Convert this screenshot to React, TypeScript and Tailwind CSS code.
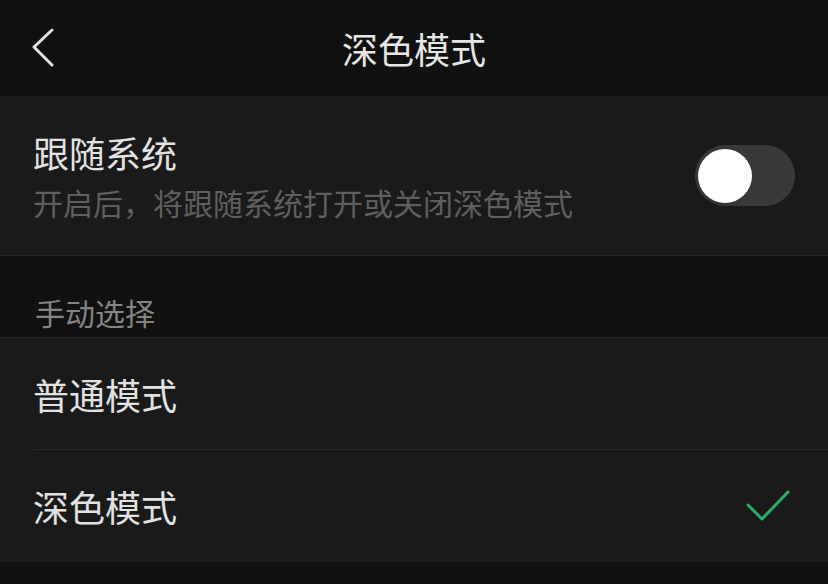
const FONT = { fontFamily: '"Noto Sans CJK SC", "Noto Sans", sans-serif' };

const BackIcon = () => (
  <svg width="24" height="40" viewBox="0 0 24 40" aria-hidden>
    <path d="M20 2 L2 19 L20 37" fill="none" stroke="#e2e2e2" strokeWidth="3" strokeLinecap="round" strokeLinejoin="round" />
  </svg>
);

const CheckIcon = () => (
  <svg width="44" height="32" viewBox="0 0 44 32" aria-hidden>
    <path d="M2 15 L16 29 L42 2" fill="none" stroke="#2aae67" strokeWidth="3" strokeLinecap="round" strokeLinejoin="round" />
  </svg>
);

const Toggle = ({ on }: { on: boolean }) => (
  <div className={`flex h-[61px] w-[100px] items-center rounded-full px-[3px] ${on ? "justify-end bg-[#2aae67]" : "justify-start bg-[#39393b]"}`}>
    <div className="h-[54px] w-[54px] rounded-full bg-white shadow" />
  </div>
);

export default function App() {
  const selected = "dark";

  return (
    <div className="min-h-[584px] w-full bg-[#111111] text-[#e2e2e2]" style={FONT}>
      {/* nav */}
      <div className="grid h-[96px] grid-cols-[1fr_auto_1fr] items-center">
        <div className="pl-[32px]">
          <BackIcon />
        </div>
        <h1 className="text-[36px] leading-[40px] text-[#e6e6e6]">深色模式</h1>
        <div />
      </div>

      {/* follow system */}
      <div className="flex h-[160px] items-center justify-between border-b border-[#262626] bg-[#1a1a1a] px-[33px]">
        <div className="flex flex-col gap-[12px]">
          <p className="text-[36px] leading-[40px] text-[#e2e2e2]">跟随系统</p>
          <p className="text-[30px] leading-[36px] text-[#5f5f5f]">开启后，将跟随系统打开或关闭深色模式</p>
        </div>
        <Toggle on={false} />
      </div>

      {/* manual section header */}
      <div className="flex h-[82px] items-end border-b border-[#262626] px-[35px] pb-[7px]">
        <p className="text-[30px] leading-[36px] text-[#858585]">手动选择</p>
      </div>

      {/* options */}
      <div className="bg-[#1a1a1a]">
        {[
          { key: "normal", label: "普通模式" },
          { key: "dark", label: "深色模式" },
        ].map((opt, i) => (
          <div key={opt.key} className="pl-[33px]">
            <div className={`flex h-[112px] items-center justify-between pr-[38px] ${i === 0 ? "border-b border-[#2a2a2a]" : ""}`}>
              <span className="text-[36px] leading-[40px] text-[#e2e2e2]">{opt.label}</span>
              {selected === opt.key ? <CheckIcon /> : null}
            </div>
          </div>
        ))}
      </div>
    </div>
  );
}
